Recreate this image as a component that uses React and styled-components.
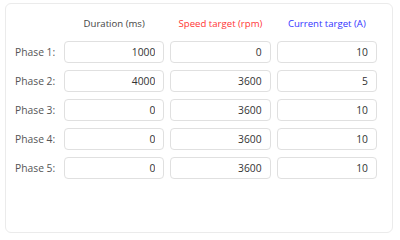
import React from "react";
import styled, { createGlobalStyle } from "styled-components";

const Global = createGlobalStyle`
  html, body { margin: 0; padding: 0; background: #ffffff; }
  body { font-family: "Open Sans", "Noto Sans", sans-serif; }
`;

const Page = styled.div`
  padding: 3px 7px 7px 5px;
  width: 400px;
  height: 240px;
  box-sizing: border-box;
`;

const Card = styled.div`
  box-sizing: border-box;
  width: 388px;
  height: 230px;
  border: 1px solid #ebebeb;
  border-radius: 6px;
  background: #fff;
  padding: 13px 15px 10px 9px;
`;

const Grid = styled.div`
  display: grid;
  grid-template-columns: 43px repeat(3, 1fr);
  column-gap: 6px;
  row-gap: 7px;
  align-items: center;
`;

const Header = styled.div`
  font-size: 9.6px;
  text-align: center;
  color: ${(p) => p.$color};
  line-height: 14px;
  margin-bottom: 3px;
`;

const Label = styled.div`
  font-size: 10.3px;
  color: #555;
  white-space: nowrap;
`;

const Field = styled.input`
  box-sizing: border-box;
  width: 100%;
  height: 22px;
  border: 1px solid #e0e0e0;
  border-radius: 4px;
  background: #fff;
  text-align: right;
  padding: 0 8px;
  font-family: "Open Sans", "Noto Sans", sans-serif;
  font-size: 10.3px;
  color: #333;
  outline: none;
`;

const rows = [
  ["1000", "0", "10"],
  ["4000", "3600", "5"],
  ["0", "3600", "10"],
  ["0", "3600", "10"],
  ["0", "3600", "10"],
];

export default function App() {
  return (
    <Page>
      <Global />
      <Card>
        <Grid>
          <div />
          <Header $color="#444">Duration (ms)</Header>
          <Header $color="#ff3535">Speed target (rpm)</Header>
          <Header $color="#3535ff">Current target (A)</Header>
          {rows.map((r, i) => (
            <React.Fragment key={i}>
              <Label>Phase {i + 1}:</Label>
              {r.map((v, j) => (
                <Field key={j} defaultValue={v} readOnly />
              ))}
            </React.Fragment>
          ))}
        </Grid>
      </Card>
    </Page>
  );
}
